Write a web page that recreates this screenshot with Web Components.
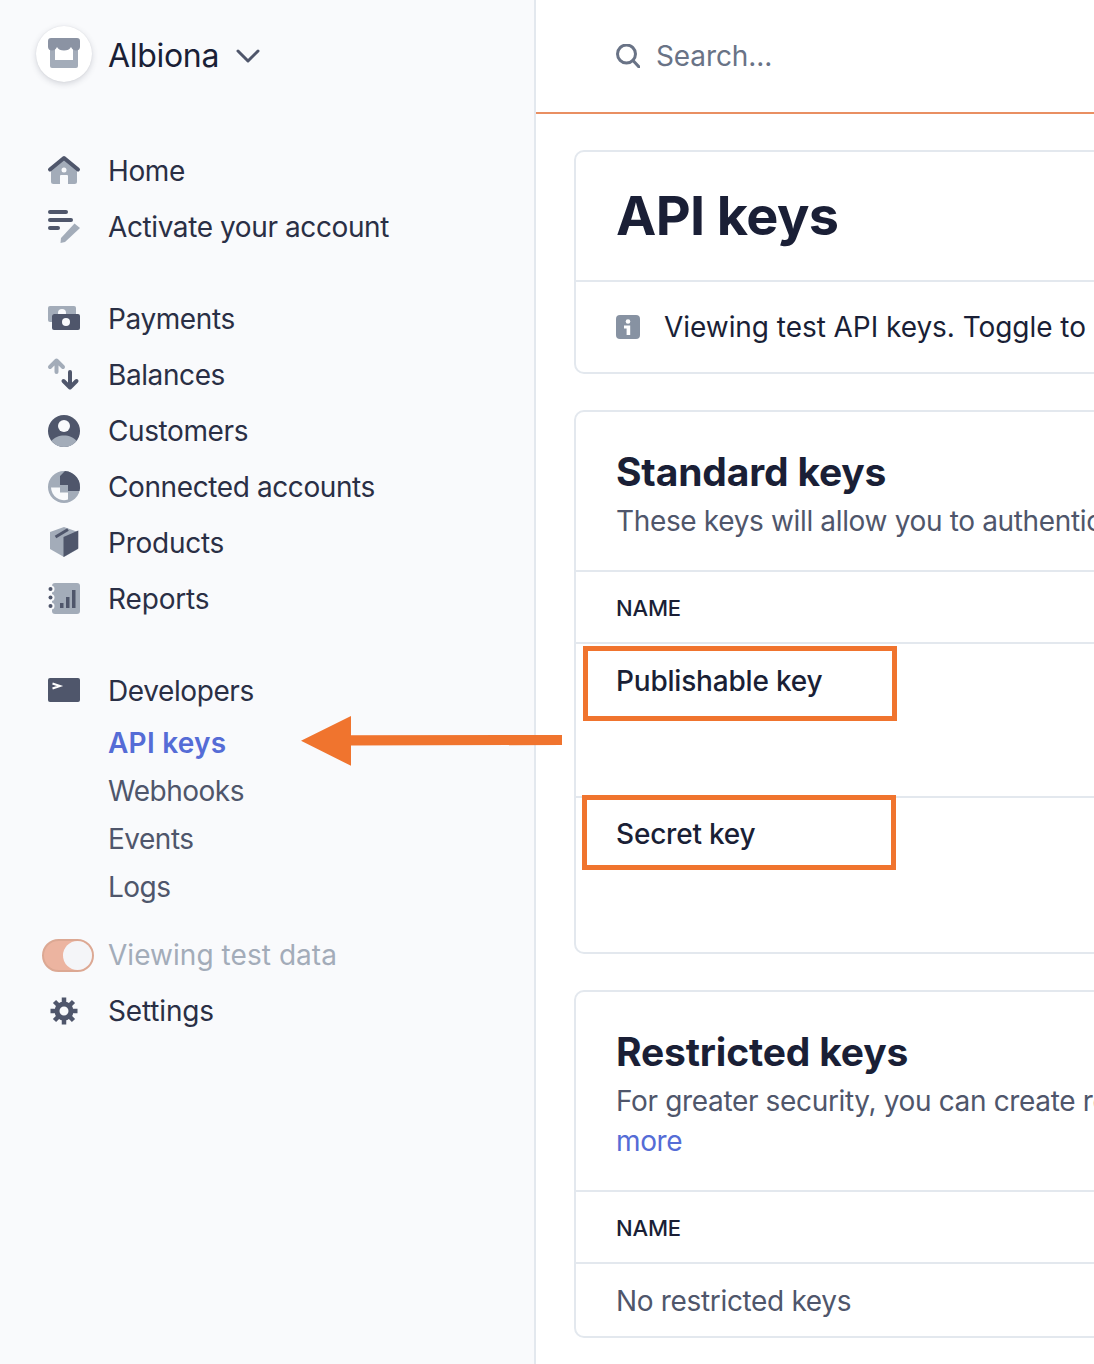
<!DOCTYPE html>
<html lang="en"><head><meta charset="utf-8"><title>API keys</title>
<style>
html,body{margin:0;padding:0;height:1364px;overflow:hidden;background:#fff}
body{font-family:Inter,"Liberation Sans",sans-serif;color:#1a1f36;font-size:28px;line-height:40px}
</style></head>
<body>
<app-shell>
  <side-bar slot="side">
    <store-switcher>Albiona</store-switcher>
    <nav-group>
      <nav-item icon="home">Home</nav-item>
      <nav-item icon="activate">Activate your account</nav-item>
    </nav-group>
    <nav-group>
      <nav-item icon="payments">Payments</nav-item>
      <nav-item icon="balances">Balances</nav-item>
      <nav-item icon="customers">Customers</nav-item>
      <nav-item icon="connected">Connected accounts</nav-item>
      <nav-item icon="products" style="letter-spacing:-.25px">Products</nav-item>
      <nav-item icon="reports" style="letter-spacing:-.15px">Reports</nav-item>
    </nav-group>
    <nav-group>
      <nav-item icon="developers">Developers</nav-item>
      <nav-sub active>API keys</nav-sub>
      <nav-sub>Webhooks</nav-sub>
      <nav-sub>Events</nav-sub>
      <nav-sub>Logs</nav-sub>
    </nav-group>
    <test-toggle>Viewing test data</test-toggle>
    <nav-item icon="settings" style="letter-spacing:-.15px">Settings</nav-item>
  </side-bar>
  <search-bar slot="top">Search...</search-bar>
  <title-card slot="main" info="Viewing test API keys. Toggle to view live keys">API keys</title-card>
  <key-card slot="main" class="std">
    <span slot="title">Standard keys</span>
    <span slot="desc">These keys will allow you to authenticate API requests.</span>
    <key-row kind="head">NAME</key-row>
    <key-row kind="tall" style="padding-top:17px">Publishable key</key-row>
    <key-row kind="tall">Secret key</key-row>
  </key-card>
  <key-card slot="main">
    <span slot="title">Restricted keys</span>
    <span slot="desc">For greater security, you can create restricted API keys<br><a-link>more</a-link></span>
    <key-row kind="head">NAME</key-row>
    <key-row kind="muted">No restricted keys</key-row>
  </key-card>
  <annot-layer slot="over"></annot-layer>
</app-shell>
<script>
const D='#4f566b',L='#a3acb9',W='#f9fafc';
const ICONS={
home:`<path fill="${L}" d="M3 14 16 4l13 10v12.500a2.500 2.500 0 0 1-2.500 2.500H20V21a1 1 0 0 0-1-1h-6a1 1 0 0 0-1 1v8H5.500A2.500 2.500 0 0 1 3 26.500z"/><circle cx="16" cy="15" r="2.500" fill="${W}"/><path fill="none" stroke="${D}" stroke-width="4" stroke-linecap="round" stroke-linejoin="round" d="M2 14.500 16 3l14 11.500"/>`,
activate:`<rect x="0" y="-1" width="20" height="4" rx="2" fill="${D}"/><rect x="0" y="7" width="25" height="4" rx="2" fill="${D}"/><rect x="0" y="15" width="12" height="4" rx="2" fill="${D}"/><path fill="${L}" d="M26.500 12.500 32 17 17 31l-4.500 1 .5-5z"/>`,
payments:`<rect x="0" y="3" width="28" height="16" rx="2" fill="${L}"/><circle cx="14" cy="10" r="4" fill="${W}"/><rect x="4" y="11" width="28" height="16" rx="2" fill="${W}"/><rect x="4" y="11" width="28" height="16" rx="2" fill="${D}"/><circle cx="18" cy="19" r="4" fill="${W}"/>`,
balances:`<g fill="none" stroke-width="4" stroke-linecap="round" stroke-linejoin="round"><path stroke="${L}" d="M8.500 1.500V13M2 8l6.500-6.500L15 8"/><path stroke="${D}" d="M22 13v15M15.500 22l6.500 6.500 6.500-6.500"/></g>`,
customers:`<circle cx="16" cy="16" r="16" fill="${D}"/><path fill="${L}" d="M3.500 26C6 22.500 11 20.500 16 20.500s10 2 12.500 5.500A16 16 0 0 1 3.500 26z"/><circle cx="16" cy="11" r="6" fill="${W}"/>`,
connected:`<circle cx="16" cy="16" r="16" fill="${L}"/><path fill="${W}" d="M3 16.500h9v5h8v7A13 13 0 0 1 3 16.500z"/><path fill="${D}" d="M17 0a16 16 0 0 1 14.500 20H20v-6h-8V5z"/>`,
products:`<path fill="${L}" d="M16 0 30 5v17l-14 8-14-8V5z"/><path fill="${D}" d="M15.500 10 30.300 3.500V21.500L15.500 30z"/><path fill="none" stroke="${D}" stroke-width="3" d="M7.500 10 20 2.500"/>`,
reports:`<rect x="4" y="0" width="28" height="31" rx="3" fill="${L}"/><g fill="${W}"><circle cx="3" cy="6" r="3.500"/><circle cx="3" cy="14.500" r="3.500"/><circle cx="3" cy="23" r="3.500"/></g><g fill="${D}"><circle cx="2.500" cy="6" r="2"/><circle cx="2.500" cy="14.500" r="2"/><circle cx="2.500" cy="23" r="2"/><rect x="12" y="20" width="3.500" height="5"/><rect x="18" y="14" width="3.500" height="11"/><rect x="24" y="7" width="3.500" height="18"/></g>`,
developers:`<rect x="0" y="3" width="32" height="24" rx="2" fill="${D}"/><path fill="none" stroke="#fff" stroke-width="2" d="M4.500 8.500 12 11l-7.500 2.500"/>`,
settings:`<g stroke="${D}" fill="none"><circle cx="16" cy="16" r="7" stroke-width="5"/><g stroke-width="4.500"><path d="M16 2.500V8M16 24v5.500M2.500 16H8M24 16h5.500M6.500 6.500l4 4M21.500 21.500l4 4M25.500 6.500l-4 4M10.500 21.500l-4 4"/></g></g>`
};
function def(name,html){
  customElements.define(name,class extends HTMLElement{
    constructor(){super();const r=this.attachShadow({mode:'open'});r.innerHTML=typeof html==='function'?html(this):html;}
  });
}
def('app-shell',`<style>
:host{display:flex;width:1094px;height:1364px;overflow:hidden;position:relative}
.side{flex:0 0 536px}
.right{flex:1;min-width:0;overflow:hidden;display:flex;flex-direction:column}
.main{display:flex;flex-direction:column;gap:36px;padding:36px 0 0 38px;width:1000px}
</style>
<div class="side"><slot name="side"></slot></div>
<div class="right"><slot name="top"></slot><div class="main"><slot name="main"></slot></div></div>
<slot name="over"></slot>`);
def('side-bar',`<style>
:host{display:block;box-sizing:border-box;height:1364px;background:#f9fafc;border-right:2px solid #e3e8ee;padding:26px 0 0 48px;overflow:hidden;letter-spacing:-.4px}
</style><slot></slot>`);
def('store-switcher',`<style>
:host{display:flex;align-items:center;height:56px;margin:0 0 61px -12px;font-size:32px;color:#1a1f36;letter-spacing:-.3px}
.a{width:56px;height:56px;border-radius:50%;background:#fff;box-shadow:0 2px 6px rgba(60,66,87,.2),0 0 1px rgba(60,66,87,.15);display:flex;align-items:center;justify-content:center;margin-right:16px}
.n{padding-top:3px}
.c{margin:4px 0 0 17px}
svg{display:block}
</style>
<div class="a"><svg width="32" height="32" viewBox="0 0 32 32"><path fill="#a3acb9" d="M2 9h28v19a2 2 0 0 1-2 2H4a2 2 0 0 1-2-2z"/><rect x="7" y="9" width="18" height="13" fill="#fff"/><path fill="#8b93a3" d="M3 0h26a3 3 0 0 1 3 3v6c0 2.500-2 3.500-4 3.500s-4-1-5-3.500c-1 2.500-4 3.500-7 3.500s-6-1-7-3.500c-1 2.500-3 3.500-5 3.500s-4-1-4-3.500V3a3 3 0 0 1 3-3z"/></svg></div>
<span class="n"><slot></slot></span>
<svg class="c" width="24" height="16" viewBox="0 0 24 16"><path fill="none" stroke="#4f566b" stroke-width="3" stroke-linecap="round" stroke-linejoin="round" d="M2 3l10 10L22 3"/></svg>`);
def('nav-group',`<style>:host{display:block;margin-bottom:36px}</style><slot></slot>`);
def('nav-item',h=>`<style>
:host{display:flex;align-items:center;height:56px;color:#2a2f45}
svg{display:block;margin-right:28px;flex:none;overflow:visible}
</style><svg width="32" height="32" viewBox="0 0 32 32">${ICONS[h.getAttribute('icon')]||''}</svg><slot></slot>`);
def('nav-sub',`<style>
:host{display:flex;align-items:center;height:48px;padding-left:60px;color:#4f566b;letter-spacing:-.5px}
:host([active]){color:#556cd6;font-weight:600;letter-spacing:.25px}
</style><slot></slot>`);
def('test-toggle',`<style>
:host{display:flex;align-items:center;height:56px;margin:-20px 0 0 -6px;color:#a3acb9;letter-spacing:.05px}
.t{box-sizing:border-box;width:52px;height:33px;border-radius:17px;background:#ecb4a0;border:2px solid #dca893;margin-right:14px;position:relative;flex:none}
.k{position:absolute;right:0;top:0;width:29px;height:29px;border-radius:50%;background:#f4f5f8}
</style><div class="t"><div class="k"></div></div><slot></slot>`);
def('search-bar',`<style>
:host{display:flex;align-items:center;box-sizing:border-box;height:114px;padding:0 0 0 80px;border-bottom:2px solid #e98f62;color:#697386;background:#fff;letter-spacing:-.1px}
svg{display:block;margin-right:16px}
</style><svg width="24" height="24" viewBox="0 0 24 24"><circle cx="10.500" cy="10" r="9" fill="none" stroke="#697386" stroke-width="3"/><path d="M17 16.500 23 23" stroke="#697386" stroke-width="3" stroke-linecap="round"/></svg><slot></slot>`);
const cardCss=`:host{display:block;box-sizing:border-box;width:1000px;background:#fff;border:2px solid #e3e8ee;border-radius:10px;overflow:hidden}`;
def('title-card',h=>`<style>${cardCss}
.t{height:128px;display:flex;align-items:center;padding-left:40px;font-size:54px;line-height:64px;font-weight:700;letter-spacing:-.6px;color:#1a1f36;border-bottom:2px solid #e3e8ee}
.i{height:90px;display:flex;align-items:center;padding-left:40px;white-space:nowrap;color:#1a1f36;letter-spacing:-.05px}
svg{display:block;margin-right:24px;flex:none}
</style><div class="t"><slot></slot></div>
<div class="i"><svg width="24" height="24" viewBox="0 0 24 24"><rect width="24" height="24" rx="4" fill="#8792a2"/><circle cx="12" cy="6.500" r="2.300" fill="#fff"/><path fill="#fff" d="M8 10.500h6.200V20h-3.600v-6.500H8z"/></svg>${h.getAttribute('info')}</div>`);
def('key-card',`<style>${cardCss}
.h{padding:36px 40px 29px;border-bottom:2px solid #e3e8ee}
.t{font-size:39px;line-height:48px;font-weight:700;letter-spacing:-.17px;color:#1a1f36;margin-bottom:5px}
.d{color:#4f566b;white-space:nowrap;letter-spacing:-.35px}
</style><div class="h"><div class="t"><slot name="title"></slot></div><div class="d"><slot name="desc"></slot></div></div><slot></slot>`);
def('key-row',`<style>
:host{display:block;box-sizing:border-box;padding-left:40px;border-bottom:2px solid #e3e8ee;color:#1a1f36}
:host(:last-child){border-bottom:0}
:host([kind=head]){height:72px;padding-top:16px;font-size:22px;font-weight:500;letter-spacing:-.15px}
:host([kind=tall]){height:154px;padding-top:16px;font-weight:500;letter-spacing:-.2px}
:host([kind=muted]){height:72px;padding-top:17px;color:#4f566b;letter-spacing:-.33px}
</style><slot></slot>`);
def('a-link',`<style>:host{color:#556cd6}</style><slot></slot>`);
def('annot-layer',`<style>
:host{position:absolute;left:0;top:0;width:1094px;height:1364px;pointer-events:none}
.b{position:absolute;box-sizing:border-box;width:314px;border:5px solid #f0742e}
svg{position:absolute;left:0;top:0}
</style>
<div class="b" style="left:583px;top:646px;height:75px"></div>
<div class="b" style="left:582px;top:795px;height:75px"></div>
<svg width="1094" height="1364" viewBox="0 0 1094 1364"><path fill="#f0742e" d="M301 740.800 351 716V735.300L562 735V745L351 745.500V765.800Z"/></svg>`);
</script>
</body></html>
